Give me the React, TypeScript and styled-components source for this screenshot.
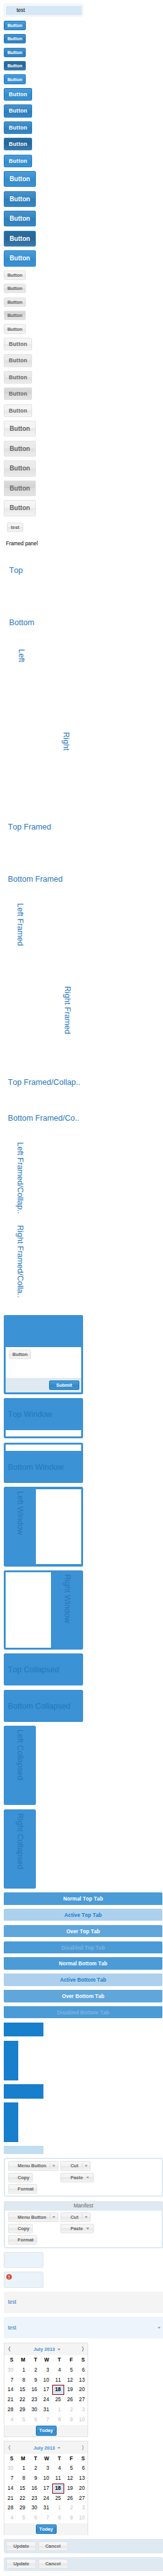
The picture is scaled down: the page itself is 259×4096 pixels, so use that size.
import React from 'react';
import styled, { createGlobalStyle, css } from 'styled-components';

const Global = createGlobalStyle`
  body { margin: 0; background: #fff; }
  * { box-sizing: border-box; }
`;

const Page = styled.main`
  zoom: 0.6308;
  width: 410px;
  height: 6493px;
  padding: 10px 0 10px 10px;
  display: flex;
  flex-direction: column;
  align-items: flex-start;
  gap: 10px;
  overflow: hidden;
  font: 13px 'Liberation Sans', Arial, sans-serif;
  font-kerning: none;
  color: #000;
  white-space: nowrap;
`;

const ListView = styled.div`
  width: 200px;
  height: 32px;
  flex: none;
  padding: 3px;
  border: 1px solid #e6e6e6;
  border-radius: 4px;
`;

const SelectedItem = styled.div`
  height: 24px;
  padding-left: 27px;
  line-height: 24px;
  background: #d6e8f6;
`;

type Tone = 'normal' | 'over' | 'focus' | 'pressed' | 'disabled';
type Size = 'small' | 'medium' | 'large';

const blueFill: Record<Tone, string> = {
  normal: 'linear-gradient(#4b9cd9, #3791d5 48%, #348ac9 50%, #358ccc 62%, #3a93d6)',
  over: 'linear-gradient(#4792ca, #3485c2 48%, #2f7eb9 50%, #307fbb 62%, #3586c4)',
  focus: 'linear-gradient(#4792ca, #3485c2 48%, #2f7eb9 50%, #307fbb 62%, #3586c4)',
  pressed: 'linear-gradient(#2a6da1, #276796 48%, #2a6796 50%, #3d7aaa)',
  disabled: 'linear-gradient(#4b9cd9, #3791d5 48%, #348ac9 50%, #358ccc 62%, #3a93d6)',
};

const grayFill: Record<Tone, string> = {
  normal: 'linear-gradient(#f6f6f6, #f3f3f3 48%, #e7e7e7 50%, #f5f5f5)',
  over: 'linear-gradient(#ededed, #eaeaea 48%, #dfdfdf 50%, #ececec)',
  focus: 'linear-gradient(#ededed, #eaeaea 48%, #dfdfdf 50%, #ececec)',
  pressed: 'linear-gradient(#dcdcdc, #d2d2d2 48%, #dcdcdc 50%, #e3e3e3)',
  disabled: 'linear-gradient(#f6f6f6, #f3f3f3 48%, #e7e7e7 50%, #f5f5f5)',
};

const sizes = {
  small: css`width: 55px; height: 24px; font-size: 12px; letter-spacing: -0.1px;`,
  medium: css`width: 71px; height: 32px; font-size: 14px; letter-spacing: 0.2px;`,
  large: css`width: 80px; height: 40px; font-size: 16px;`,
};

const Button = styled.button<{ $primary?: boolean; $tone?: Tone; $size?: Size; $width?: number }>`
  flex: none;
  display: flex;
  align-items: center;
  justify-content: center;
  padding: 0;
  border: 1px solid
    ${p => (p.$primary ? (p.$tone && p.$tone !== 'normal' ? '#2381c9' : '#1c74b6') : '#e2e2e2')};
  border-radius: 3px;
  font-family: inherit;
  font-weight: bold;
  font-kerning: none;
  color: ${p => (p.$primary ? '#fff' : '#666')};
  background: ${p => (p.$primary ? blueFill : grayFill)[p.$tone ?? 'normal']};
  ${p => sizes[p.$size ?? 'small']}
  ${p => p.$width && `width: ${p.$width}px;`}
`;

const ButtonPanel = styled.div`
  flex: none;
  height: 36px;
  padding: 6px 8px;
`;

const FramedText = styled.div`
  flex: none;
  height: 26px;
  padding-left: 5px;
  line-height: 28px;
`;

type Side = 'top' | 'bottom' | 'left' | 'right';

const BLUE = '#3b92d4';
const vertical = (s: Side) => s === 'left' || s === 'right';
const directions: Record<Side, string> = {
  top: 'column',
  bottom: 'column-reverse',
  left: 'row',
  right: 'row-reverse',
};

const Frame = styled.section<{ $side: Side; $look: 'plain' | 'framed' | 'window'; $collapsed?: boolean }>`
  flex: none;
  display: flex;
  flex-direction: ${p => directions[p.$side]};
  width: ${p => (p.$collapsed && vertical(p.$side) ? 81 : 200)}px;
  height: ${p => (vertical(p.$side) ? 200 : p.$collapsed ? 81 : p.$look === 'plain' ? 105 : 102)}px;
  padding: ${p => (p.$look === 'plain' ? 3 : 0)}px;
  border-radius: 4px;
  background: ${p => (p.$look === 'window' ? BLUE : 'transparent')};
`;

const FrameTitle = styled.h2<{ $side: Side }>`
  flex: none;
  margin: 0;
  display: flex;
  align-items: center;
  font-size: 20px;
  font-weight: normal;
  color: #2777bd;
  ${p =>
    vertical(p.$side)
      ? css`width: 81px; padding-top: 10px; writing-mode: vertical-rl;`
      : css`height: 81px; padding: 2px 0 0 10px;`}
`;

const bodyMargins: Record<Side, string> = {
  top: '0 5px 5px',
  bottom: '5px 5px 0',
  left: '5px 5px 5px 0',
  right: '5px 0 5px 5px',
};

const FrameBody = styled.div<{ $side: Side }>`
  flex: 1;
  margin: ${p => bodyMargins[p.$side]};
  background: #fff;
`;

const Dialog = styled.section`
  flex: none;
  width: 200px;
  height: 200px;
  margin-top: 26px;
  padding: 81px 5px 5px;
  border-radius: 4px;
  background: ${BLUE};
`;

const DialogBody = styled.div`
  height: 78px;
  padding: 6px 8px;
  background: #fff;
`;

const DialogFooter = styled.div`
  height: 36px;
  padding: 6px;
  display: flex;
  justify-content: flex-end;
  background: #dfe9f2;
`;

const tabTones = {
  normal: css`background: #4b9bd7; color: #fff;`,
  active: css`background: #add1ed; color: #187ecb;`,
  over: css`background: #5fa6db; color: #fff;`,
  disabled: css`background: #4b9bd7; color: #7fb5e1;`,
};

const Tab = styled.div<{ $tone: keyof typeof tabTones; $bottom?: boolean }>`
  flex: none;
  width: 399px;
  height: 31px;
  border-radius: ${p => (p.$bottom ? '0 0 3px 3px' : '3px 3px 0 0')};
  line-height: 34px;
  text-align: center;
  font-weight: bold;
  letter-spacing: 0.1px;
  ${p => tabTones[p.$tone]}
`;

const Block = styled.div<{ $w: number; $h: number; $pale?: boolean }>`
  flex: none;
  width: ${p => p.$w}px;
  height: ${p => p.$h}px;
  background: ${p => (p.$pale ? '#c1ddf1' : '#187fcc')};
`;

const Group = styled.section`
  flex: none;
  width: 400px;
  padding: 0 3px 3px;
  border-radius: 4px;
  background: #dfe9f2;
`;

const GroupTitle = styled.div<{ $empty?: boolean }>`
  height: ${p => (p.$empty ? 3 : 24)}px;
  line-height: 25px;
  text-align: center;
  color: #666;
`;

const GroupBody = styled.div`
  height: 92px;
  padding: 5px 7px;
  display: grid;
  grid-template-columns: 133px auto;
  grid-auto-rows: 24px;
  gap: 5px 0;
  justify-content: start;
  background: #fff;
`;

const ToolButton = styled(Button)`
  justify-content: flex-start;
  padding-left: 23px;
`;

const Split = styled.i<{ $gap: number }>`
  flex: none;
  width: 2px;
  height: 16px;
  margin-left: ${p => p.$gap}px;
  background: linear-gradient(90deg, #fff 50%, #dcdcdc 50%);
`;

const Caret = styled.i<{ $gap?: number }>`
  flex: none;
  width: 8px;
  height: 5px;
  margin-left: ${p => p.$gap ?? 5}px;
  background: #999;
  clip-path: polygon(0 0, 100% 0, 50% 100%);
`;

const Field = styled.div`
  flex: none;
  width: 100px;
  height: 40px;
  padding: 4px;
  border: 1px solid #e2e4e6;
  border-radius: 3px;
  background: #eaf2fa;
`;

const Alert = styled.svg`
  display: block;
  width: 14px;
  height: 14px;
`;

const Section = styled.div<{ $over?: boolean }>`
  flex: none;
  width: 400px;
  height: 54px;
  padding: 0 5px 0 10px;
  display: flex;
  align-items: center;
  justify-content: space-between;
  color: #2777bd;
  background: ${p => (p.$over ? '#edf4fb' : '#f4f4f4')};
`;

const Calendar = styled.section`
  flex: none;
  width: 212px;
  height: 238px;
  border: 1px solid #e2e2e2;
  background: #fff;
`;

const MonthBar = styled.header<{ $dim?: boolean }>`
  height: 31px;
  padding: 0 9px;
  display: flex;
  align-items: center;
  justify-content: space-between;
  background: #f4f4f4;
  svg { width: 6px; height: 13px; opacity: ${p => (p.$dim ? 0.75 : 1)}; }
`;

const Month = styled.div`
  margin-left: 5px;
  padding-top: 2px;
  display: flex;
  align-items: center;
  font-size: 12px;
  font-weight: bold;
  color: #3b92d4;
`;

const Days = styled.div`
  display: grid;
  grid-template-columns: repeat(7, 30px);
  grid-auto-rows: 25px;
`;

const Day = styled.span<{ $head?: boolean; $other?: boolean; $selected?: boolean }>`
  padding-right: 8px;
  line-height: 25px;
  text-align: right;
  color: ${p => (p.$other ? '#bfbfbf' : '#000')};
  font-weight: ${p => (p.$head || p.$selected ? 'bold' : 'normal')};
  ${p => p.$selected && css`
    border: 1px solid #8b0000;
    padding-right: 7px;
    line-height: 23px;
    background: #d6e8f6;
  `}
`;

const CalendarFooter = styled.footer`
  height: 30px;
  padding-top: 3px;
  display: flex;
  justify-content: center;
  background: #f4f4f4;
`;

const EditorBar = styled.div<{ $bottom?: boolean }>`
  flex: none;
  width: 400px;
  height: 35px;
  padding: 5px 6px;
  display: flex;
  gap: 5px;
  border-radius: ${p => (p.$bottom ? '5px 5px 0 0' : '0 0 5px 5px')};
  background: #dfe9f2;
`;

const tones: Tone[] = ['normal', 'over', 'focus', 'pressed', 'disabled'];
const buttonSizes: Size[] = ['small', 'medium', 'large'];

function ButtonStates({ primary }: { primary?: boolean }) {
  return (
    <>
      {buttonSizes.map(size =>
        tones.map(tone => (
          <Button key={size + tone} $primary={primary} $size={size} $tone={tone}>Button</Button>
        )),
      )}
    </>
  );
}

type PanelProps = { side: Side; title: string; look?: 'plain' | 'framed' | 'window'; collapsed?: boolean };

function Panel({ side, title, look = 'framed', collapsed }: PanelProps) {
  return (
    <Frame $side={side} $look={look} $collapsed={collapsed}>
      <FrameTitle $side={side}>{title}</FrameTitle>
      {!collapsed && look === 'window' && <FrameBody $side={side} />}
    </Frame>
  );
}

function ButtonGroup({ title }: { title?: string }) {
  return (
    <Group>
      <GroupTitle $empty={!title}>{title}</GroupTitle>
      <GroupBody>
        <ToolButton $width={128}>Menu Button<Split $gap={8} /><Caret /></ToolButton>
        <ToolButton $width={76}>Cut<Split $gap={9} /><Caret /></ToolButton>
        <ToolButton $width={62}>Copy</ToolButton>
        <ToolButton $width={83}>Paste<Caret $gap={8} /></ToolButton>
        <ToolButton $width={74}>Format</ToolButton>
      </GroupBody>
    </Group>
  );
}

function Chevron({ right }: { right?: boolean }) {
  return (
    <svg viewBox="0 0 6 13">
      <path
        d={right
          ? 'M0.3 0H2.6Q3.8 4.4 6 6.5Q3.8 8.6 2.6 13H0.3Q1.2 8.8 3 6.5Q1.2 4.2 0.3 0Z'
          : 'M5.7 0H3.4Q2.2 4.4 0 6.5Q2.2 8.6 3.4 13H5.7Q4.8 8.8 3 6.5Q4.8 4.2 5.7 0Z'}
        fill="#999"
      />
    </svg>
  );
}

const monthDays = [30, ...Array.from({ length: 31 }, (_, i) => i + 1), ...Array.from({ length: 10 }, (_, i) => i + 1)];

function DatePicker({ dim }: { dim?: boolean }) {
  return (
    <Calendar>
      <MonthBar $dim={dim}>
        <Chevron />
        <Month>July 2013<Caret $gap={6} /></Month>
        <Chevron right />
      </MonthBar>
      <Days>
        {['S', 'M', 'T', 'W', 'T', 'F', 'S'].map((d, i) => <Day key={`h${i}`} $head>{d}</Day>)}
        {monthDays.map((d, i) => (
          <Day key={i} $other={i === 0 || i > 31} $selected={i === 18}>{d}</Day>
        ))}
      </Days>
      <CalendarFooter>
        <Button $primary $width={52}>Today</Button>
      </CalendarFooter>
    </Calendar>
  );
}

export default function App() {
  return (
    <>
      <Global />
      <Page>
        <ListView><SelectedItem>test</SelectedItem></ListView>
        <ButtonStates primary />
        <ButtonStates />
        <ButtonPanel><Button $width={40}>test</Button></ButtonPanel>
        <FramedText>Framed panel</FramedText>
        <Panel side="top" look="plain" title="Top" />
        <Panel side="bottom" look="plain" title="Bottom" />
        <Panel side="left" look="plain" title="Left" />
        <Panel side="right" look="plain" title="Right" />
        <Panel side="top" title="Top Framed" />
        <Panel side="bottom" title="Bottom Framed" />
        <Panel side="left" title="Left Framed" />
        <Panel side="right" title="Right Framed" />
        <Panel side="top" collapsed title="Top Framed/Collap.." />
        <Panel side="bottom" collapsed title="Bottom Framed/Co.." />
        <Panel side="left" collapsed title="Left Framed/Collap.." />
        <Panel side="left" collapsed title="Right Framed/Colla.." />
        <Dialog>
          <DialogBody><Button>Button</Button></DialogBody>
          <DialogFooter><Button $primary $width={75}>Submit</Button></DialogFooter>
        </Dialog>
        <Panel side="top" look="window" title="Top Window" />
        <Panel side="bottom" look="window" title="Bottom Window" />
        <Panel side="left" look="window" title="Left Window" />
        <Panel side="right" look="window" title="Right Window" />
        <Panel side="top" look="window" collapsed title="Top Collapsed" />
        <Panel side="bottom" look="window" collapsed title="Bottom Collapsed" />
        <Panel side="left" look="window" collapsed title="Left Collapsed" />
        <Panel side="left" look="window" collapsed title="Right Collapsed" />
        <Tab $tone="normal">Normal Top Tab</Tab>
        <Tab $tone="active">Active Top Tab</Tab>
        <Tab $tone="over">Over Top Tab</Tab>
        <Tab $tone="disabled">Disabled Top Tab</Tab>
        <Tab $bottom $tone="normal">Normal Bottom Tab</Tab>
        <Tab $bottom $tone="active">Active Bottom Tab</Tab>
        <Tab $bottom $tone="over">Over Bottom Tab</Tab>
        <Tab $bottom $tone="disabled">Disabled Bottom Tab</Tab>
        <Block $w={100} $h={36} />
        <Block $w={36} $h={100} />
        <Block $w={100} $h={36} />
        <Block $w={36} $h={100} />
        <Block $w={100} $h={20} $pale />
        <ButtonGroup />
        <ButtonGroup title="Manifest" />
        <Field />
        <Field>
          <Alert viewBox="0 0 14 14">
            <circle cx="7" cy="7" r="7" fill="#d94b37" />
            <path d="M6 3h2v5H6zM6 9h2v2H6z" fill="#fff" />
          </Alert>
        </Field>
        <Section>test</Section>
        <Section $over>test<Caret /></Section>
        <DatePicker />
        <DatePicker dim />
        <EditorBar>
          <Button $width={75}>Update</Button>
          <Button $width={75}>Cancel</Button>
        </EditorBar>
        <EditorBar $bottom>
          <Button $width={75}>Update</Button>
          <Button $width={75}>Cancel</Button>
        </EditorBar>
      </Page>
    </>
  );
}
